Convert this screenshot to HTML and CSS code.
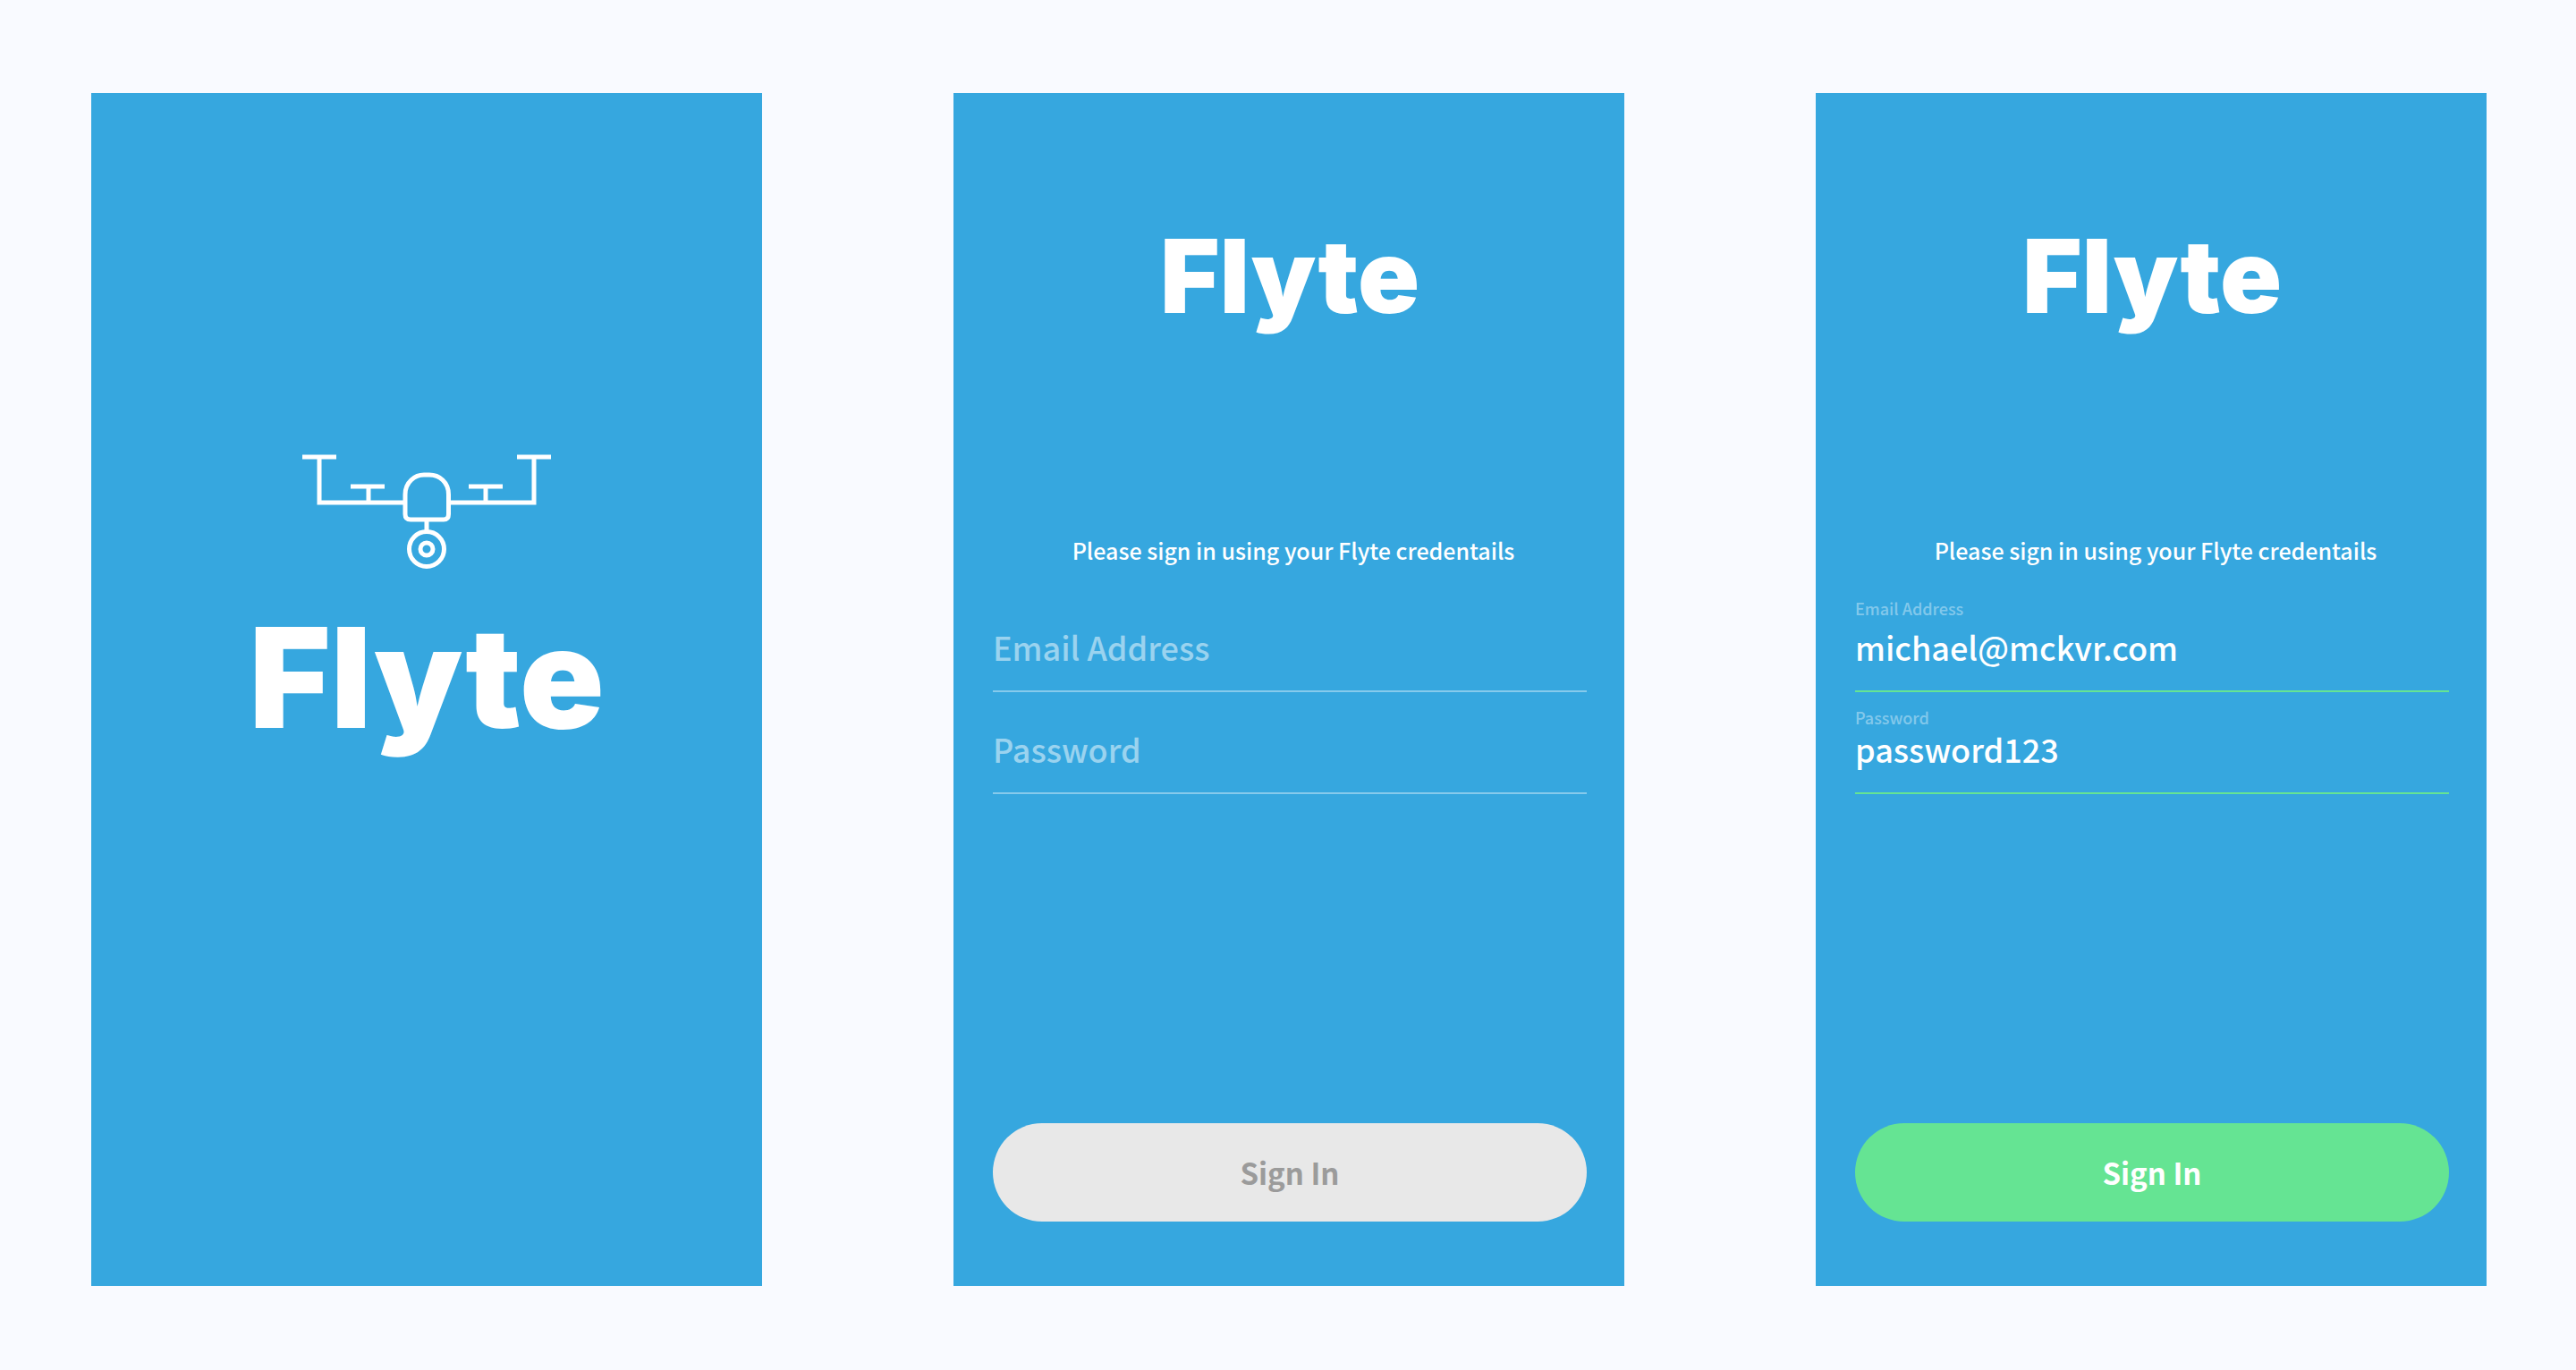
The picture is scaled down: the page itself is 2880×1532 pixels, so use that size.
FILE: index.html
```
<!DOCTYPE html>
<html lang="en">
<head>
  <meta charset="utf-8">
  <meta name="viewport" content="width=device-width, initial-scale=1">
  <title>Flyte</title>
  <link rel="stylesheet" href="styles.css">
</head>
<body>
  <main class="screens">
    <section class="screen screen-splash">
      <svg class="drone" viewBox="0 0 278 128" fill="none" stroke="currentColor" stroke-width="5" aria-hidden="true">
        <path d="M0 3H38M19 3V54H115M54 36H92M74 36V54"/>
        <path d="M278 3H240M259 3V54H163M224 36H186M205 36V54"/>
        <path d="M115 45C115 31 126 23 136 23H142C153 23 163.500 31 163.500 45V67Q163.500 73 158 73H121Q115 73 115 67Z"/>
        <path d="M139 73V86"/>
        <circle cx="139" cy="106" r="19.500"/>
        <circle cx="139" cy="106" r="7"/>
      </svg>
      <h1 class="wordmark wordmark-large">Flyte</h1>
    </section>

    <section class="screen screen-login">
      <h2 class="wordmark">Flyte</h2>
      <form class="login">
        <p class="lead">Please sign in using your Flyte credentails</p>
        <div class="field">
          <input class="field-input" id="email-empty" type="text" placeholder=" ">
          <label class="field-label" for="email-empty">Email Address</label>
        </div>
        <div class="field field-password">
          <input class="field-input" id="password-empty" type="text" placeholder=" ">
          <label class="field-label" for="password-empty">Password</label>
        </div>
        <button class="submit" type="submit" disabled>Sign In</button>
      </form>
    </section>

    <section class="screen screen-login">
      <h2 class="wordmark">Flyte</h2>
      <form class="login">
        <p class="lead">Please sign in using your Flyte credentails</p>
        <div class="field">
          <input class="field-input" id="email" type="text" placeholder=" " value="michael@mckvr.com">
          <label class="field-label" for="email">Email Address</label>
        </div>
        <div class="field field-password">
          <input class="field-input" id="password" type="text" placeholder=" " value="password123">
          <label class="field-label" for="password">Password</label>
        </div>
        <button class="submit" type="submit">Sign In</button>
      </form>
    </section>
  </main>
</body>
</html>
```

FILE: styles.css
```
* {
  box-sizing: border-box;
}

body {
  margin: 0;
  background: #f9faff;
  color: #fff;
  font-family: "Noto Sans CJK JP", "Noto Sans", sans-serif;
  font-weight: 500;
}

.screens {
  display: grid;
  grid-template-columns: repeat(3, 1fr);
  gap: 214px;
  padding: 104px 100px 94px 102px;
}

.screen {
  display: flex;
  flex-direction: column;
  aspect-ratio: 750 / 1334;
  background: #36a7df;
}

.screen-splash {
  align-items: center;
  gap: 36px;
  padding-top: 404px;
}

.screen-login {
  padding: 141px 42px 72px 44px;
}

.drone {
  width: 278px;
  height: 128px;
}

.wordmark {
  margin: 0;
  font-family: Inter, sans-serif;
  font-size: 114px;
  font-weight: 900;
  line-height: 128px;
  text-align: center;
}

.wordmark-large {
  font-size: 156px;
  line-height: 172px;
}

.login {
  display: flex;
  flex: 1;
  flex-direction: column;
  padding-top: 222px;
}

.lead {
  margin: 0 0 25px;
  padding-left: 8px;
  font-size: 25px;
  line-height: 40px;
  text-align: center;
}

/* The label lies over its input and floats up once there is a value. */
.field {
  display: grid;
}

.field-input,
.field-label {
  grid-area: 1 / 1;
}

.field-input {
  width: 100%;
  height: 114px;
  padding: 40px 0 26px;
  border: 0;
  border-bottom: 2px solid #65e493;
  border-radius: 0;
  outline: 0;
  background: none;
  color: inherit;
  font: 500 36px/46px "Noto Sans CJK JP", "Noto Sans", sans-serif;
}

.field-label {
  padding-top: 10px;
  color: rgba(255, 255, 255, 0.4);
  font-size: 18px;
  line-height: 20px;
  pointer-events: none;
}

.field-password .field-label {
  padding-top: 18px;
}

.field-input:placeholder-shown {
  border-color: rgba(255, 255, 255, 0.4);
}

.field .field-input:placeholder-shown + .field-label {
  padding-top: 40px;
  color: rgba(255, 255, 255, 0.5);
  font-size: 36px;
  line-height: 46px;
}

.submit {
  height: 110px;
  margin-top: auto;
  padding: 0;
  border: 0;
  border-radius: 55px;
  background: #65e493;
  color: #fff;
  font: 700 33px/48px "Noto Sans CJK JP", "Noto Sans", sans-serif;
}

.submit:disabled {
  background: #e8e8e8;
  color: #9b9b9b;
}

@media (max-width: 2000px) {
  .screens {
    grid-template-columns: minmax(0, 750px);
    justify-content: center;
    gap: 64px;
    padding: 64px 24px;
  }

  .screen {
    min-height: 1200px;
    aspect-ratio: auto;
  }
}
```
